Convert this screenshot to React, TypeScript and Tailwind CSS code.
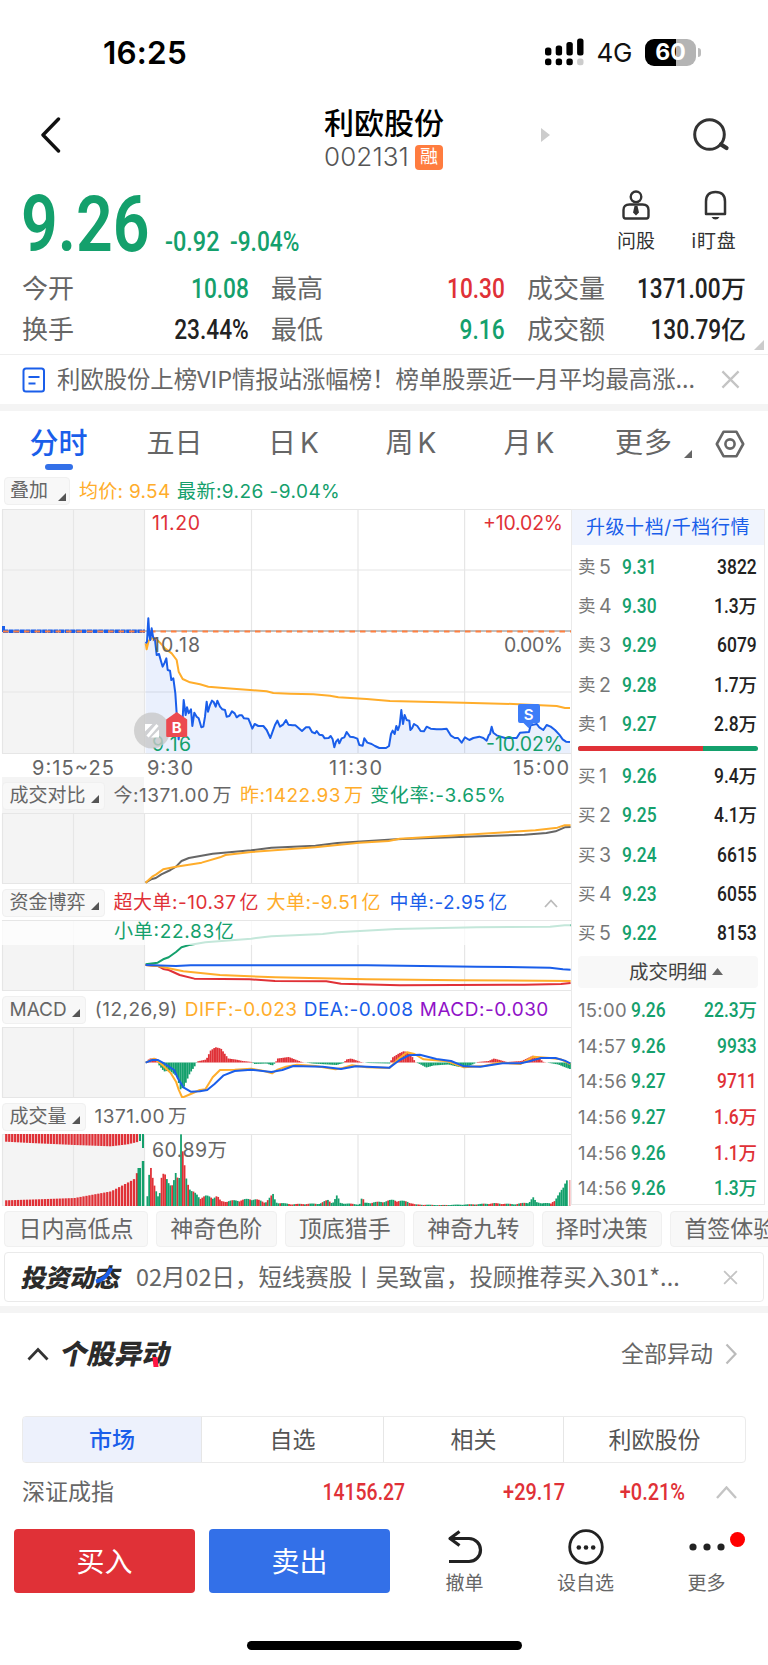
import React from "react";
import clsx from "clsx";

const GREEN = "#14a06c";
const RED = "#e03137";
const BLUE = "#1a5eea";
const ORANGE = "#ffad2b";
const GRAY = "#666666";

type Point = [number, number];

// Condensed figures used for every quote on the page
const Num = ({
  children,
  left,
  className,
}: {
  children: React.ReactNode;
  left?: boolean;
  className?: string;
}) => (
  <span
    className={clsx(
      "inline-block scale-x-[0.83] font-['Roboto'] font-medium",
      left ? "origin-left" : "origin-right",
      className
    )}
  >
    {children}
  </span>
);

const interpolate = (points: Point[], x: number) => {
  for (let i = 1; i < points.length; i++) {
    const [x0, y0] = points[i - 1];
    const [x1, y1] = points[i];
    if (x >= x0 && x <= x1) {
      return y0 + ((y1 - y0) * (x - x0)) / (x1 - x0);
    }
  }
  return 0;
};

const Line = ({ points, color, opacity }: { points: string; color: string; opacity?: number }) => (
  <polyline
    points={points}
    fill="none"
    stroke={color}
    strokeWidth={2}
    strokeLinejoin="round"
    opacity={opacity}
    vectorEffect="non-scaling-stroke"
  />
);

const Grid = ({ top, bottom, rows = [] }: { top: number; bottom: number; rows?: number[] }) => (
  <g stroke="#e6e6e6" strokeWidth={1.2}>
    <rect x={2} y={top} width={142.5} height={bottom - top} fill="#f4f4f4" stroke="none" />
    {[2.5, 73.5, 144.5, 251.5, 358, 464.6].map((x) => (
      <line key={x} x1={x} x2={x} y1={top} y2={bottom} />
    ))}
    {[top, ...rows, bottom].map((y) => (
      <line key={y} x1={2} x2={571} y1={y} y2={y} />
    ))}
  </g>
);

const priceLine =
  "437,430 441,425 445,355 448,405 451,420 455,385 459,410 465,420 470,465 477,462 482,480 488,500 494,488 499,475 503,510 510,512 514,540 520,535 526,580 530,640 536,718 540,680 546,690 551,600 557,645 561,622 566,640 573,628 577,678 583,638 590,650 596,655 604,682 610,680 615,650 620,605 624,635 630,615 636,602 641,606 647,620 652,602 660,620 667,628 675,630 680,650 688,648 696,634 704,640 710,652 718,646 726,646 732,655 745,656 750,668 757,686 764,672 775,678 790,678 800,690 811,714 818,694 825,675 832,662 840,680 850,673 858,660 865,674 878,676 886,676 906,693 918,682 928,682 936,696 945,700 950,693 958,704 968,706 974,715 986,714 992,708 998,718 1003,742 1008,725 1014,718 1018,730 1025,715 1033,712 1040,696 1050,710 1062,712 1072,716 1078,735 1088,737 1093,715 1102,728 1115,732 1125,738 1138,744 1158,744 1167,738 1173,702 1178,692 1184,702 1189,678 1194,690 1199,675 1204,630 1209,672 1214,645 1220,660 1228,662 1231,690 1236,685 1242,672 1252,678 1262,693 1272,694 1280,680 1292,686 1310,688 1325,688 1340,686 1352,706 1364,714 1374,714 1385,728 1395,712 1408,720 1420,714 1438,710 1450,714 1460,722 1466,706 1470,702 1475,680 1480,698 1490,706 1515,714 1550,714 1560,698 1587,696 1592,676 1610,672 1618,682 1630,690 1640,675 1652,680 1665,690 1678,704 1688,718 1698,725 1710,726";
const averageLine =
  "437,430 440,448 446,422 455,415 465,414 480,428 495,445 515,460 530,480 536,515 548,537 570,547 600,553 625,560 680,565 750,570 800,574 820,579 870,581 940,583 990,587 1015,592 1100,597 1170,603 1390,608 1540,612 1670,618 1695,624 1710,624";

const PriceChart = () => (
  <svg className="block overflow-visible" width={571} height={268} viewBox="0 509 571 268">
    <Grid top={509.5} bottom={753.5} rows={[570, 692]} />
    <line x1={2} x2={571} y1={631} y2={631} stroke="#aaa" strokeWidth={1.4} />
    <line x1={3} x2={145} y1={631.3} y2={631.3} stroke={BLUE} strokeWidth={3.4} strokeDasharray="5 .6" />
    <rect x={2} y={626} width={3} height={6} fill={BLUE} />
    <line x1={3} x2={571} y1={631.5} y2={631.5} stroke="#ff8040" strokeWidth={1.8} strokeDasharray="5.5 5" />
    <g transform="translate(0 500) scale(.33333)">
      <polygon points={`437,760 ${priceLine} 1712,760`} fill="#1a5eea" opacity={0.09} />
      <Line points={averageLine} color={ORANGE} />
      <Line points={priceLine} color={BLUE} />
    </g>
    <g fontFamily="Inter" fontSize={19.5} fill={GRAY}>
      <text x={152} y={530} textLength={48} fill={RED}>11.20</text>
      <text x={152} y={652} textLength={48}>10.18</text>
      <text x={483} y={530} textLength={80} fill={RED}>+10.02%</text>
      <text x={504} y={652} textLength={59}>0.00%</text>
      <text x={486} y={751} textLength={77} fill={GREEN}>-10.02%</text>
      <text x={152} y={751} textLength={39} fill={GREEN}>9.16</text>
      <text x={32} y={774.5} textLength={82} fontSize={20}>9:15~25</text>
      <text x={147} y={774.5} textLength={46} fontSize={20}>9:30</text>
      <text x={329} y={774.5} textLength={53} fontSize={20}>11:30</text>
      <text x={513} y={774.5} textLength={56} fontSize={20}>15:00</text>
    </g>
    <circle cx={152} cy={730.5} r={18} fill="#c8c8c8" opacity={0.8} />
    <path d="M145 724h7.500l-7.500 7.500zM159 729.500v8h-8z" fill="#fff" />
    <path d="M147.500 736.500l10-11.500" stroke="#fff" strokeWidth={3} />
    <path d="M176.700 712l10.500 7.500v16.500q0 1-1 1h-19q-1 0-1-1v-16.500z" fill="#ec4a50" />
    <text x={176.7} y={733} fontFamily="Inter" fontWeight={700} fontSize={15} fill="#fff" textAnchor="middle">B</text>
    <path d="M520 704h18q2 0 2 2v15q0 2-2 2h-4.500l-5 5l-5-5h-3.500q-2 0-2-2v-15q0-2 2-2z" fill="#3d7df8" />
    <text x={528.7} y={719.5} fontFamily="Inter" fontWeight={600} fontSize={15} fill="#fff" textAnchor="middle">S</text>
  </svg>
);

const CompareChart = () => (
  <svg className="block" width={571} height={71} viewBox="0 813 571 71">
    <Grid top={813.5} bottom={883.5} />
    <g transform="translate(0 770) scale(.3667 .3333)">
      <Line color={GRAY} points="397,338 412,328 425,324 440,313 465,300 480,290 495,273 515,264 580,251 685,241 740,233 860,227 920,219 1080,208 1270,200 1430,194 1490,189 1515,184 1540,172 1556,171" />
      <Line color={ORANGE} points="397,338 415,320 425,314 445,298 480,290 550,278 600,262 615,255 685,246 860,232 980,218 1060,213 1090,206 1270,194 1460,181 1520,173 1540,166 1556,166" />
    </g>
  </svg>
);

const FundsChart = () => (
  <svg className="block" width={571} height={71} viewBox="0 920 571 71">
    <Grid top={920.5} bottom={990.5} />
    <g transform="translate(0 770) scale(.3667 .3333)">
      <Line color={GREEN} points="397,583 430,578 445,568 460,562 480,546 495,532 520,524 560,517 685,506 740,499 880,492 920,487 1080,477 1300,472 1500,470 1540,466 1556,466" />
      <Line color={RED} points="397,585 430,588 445,597 460,600 490,615 530,626 680,628 750,633 890,634 930,641 1090,646 1430,644 1530,642 1556,639" />
      <Line color={ORANGE} points="397,585 430,588 500,604 600,615 750,622 1000,628 1250,631 1556,633" />
      <Line color={BLUE} points="397,585 480,588 520,586 1000,586 1300,590 1500,593 1535,598 1556,599" />
    </g>
    <rect x={0} y={921} width={570} height={24} fill="#fff" opacity={0.75} />
    <text x={114} y={938} textLength={120} fontSize={19} fill={GREEN} fontFamily="Inter, 'Noto Sans CJK SC', sans-serif">小单:22.83亿</text>
  </svg>
);

const histogram: Point[] = [
  [399, 1], [405, 4], [425, 4], [430, -2], [445, -9], [460, -8], [480, -14], [490, -27],
  [500, -24], [515, -11], [530, -3], [535, 1], [560, 3], [572, 12], [585, 15.3], [600, 14],
  [620, 4], [640, 3], [660, 1.5], [685, 0.5], [690, -1.5], [725, -1], [740, -3], [748, -0.5],
  [755, 4], [785, 5.5], [820, 0.5], [850, -1], [915, -2.5], [935, -0.5], [942, 3], [955, 4],
  [982, 0.5], [1000, -0.5], [1060, -1], [1068, 5], [1085, 9], [1100, 11.5], [1118, 8],
  [1130, 0.5], [1145, -2], [1160, -5], [1180, -3], [1220, -2], [1250, -4.5], [1280, -3],
  [1300, 0.5], [1330, 1.5], [1345, 4], [1380, 0.5], [1420, 1.5], [1452, 7], [1465, 5],
  [1480, 0.5], [1520, -2], [1540, -5], [1556, -7],
];

const MacdChart = () => (
  <svg className="block" width={571} height={71} viewBox="0 1027 571 71">
    <Grid top={1027.5} bottom={1097.5} />
    {Array.from({ length: 240 }, (_, i) => {
      const x = 146 + i * 1.77;
      const v = interpolate(histogram, x * 2.727);
      return (
        <rect
          key={i}
          x={x}
          y={v > 0 ? 1062.5 - v : 1062.5}
          width={1.8}
          height={Math.abs(v)}
          fill={v > 0 ? RED : GREEN}
        />
      );
    })}
    <g transform="translate(0 990) scale(.3667 .3333)">
      <Line color={ORANGE} points="397,218 420,206 440,222 465,248 480,275 487,298 497,323 520,312 545,300 560,298 580,262 600,240 640,239 685,236 720,243 742,250 755,240 780,230 810,224 860,228 915,238 935,234 960,226 1000,232 1062,234 1085,208 1110,187 1130,192 1155,208 1220,214 1265,232 1320,228 1360,218 1420,222 1455,200 1500,204 1530,208 1555,222" />
      <Line color={BLUE} points="397,218 415,210 430,210 450,222 475,240 485,265 500,292 520,305 545,304 565,300 585,282 610,256 640,243 685,239 740,246 770,240 800,228 880,230 930,237 970,229 1062,233 1090,210 1115,196 1145,194 1190,207 1230,213 1265,229 1310,230 1370,220 1420,220 1450,212 1475,204 1515,204 1540,212 1555,220" />
    </g>
  </svg>
);

const auctionTop: Point[] = [[12, 23], [80, 27], [200, 33], [300, 37], [345, 31], [372, 24]];
const auctionBottom: Point[] = [[12, 17], [100, 20], [200, 24], [300, 44], [345, 70], [362, 80], [372, 102]];
const volume: Point[] = [
  [398, 40], [402, 45], [406, 128], [411, 106], [416, 70], [424, 45], [429, 32], [434, 55],
  [440, 98], [449, 94], [455, 72], [465, 58], [471, 70], [475, 104], [482, 84], [487, 84],
  [490, 215], [493, 215], [497, 148], [503, 108], [507, 70], [520, 46], [535, 38], [545, 28],
  [560, 32], [575, 30], [590, 32], [600, 15], [640, 18], [690, 24], [720, 12], [742, 37],
  [750, 12], [790, 6], [870, 8], [892, 20], [905, 10], [917, 34], [925, 10], [978, 5],
  [985, 28], [993, 10], [1040, 14], [1070, 20], [1110, 14], [1130, 5], [1200, 3], [1300, 6],
  [1345, 9], [1400, 6], [1440, 12], [1451, 28], [1460, 12], [1500, 8], [1515, 28], [1530, 50],
  [1545, 80], [1547, 0], [1560, 0],
];

const isRedBar = (i: number, x: number) => {
  if (i < 2 || x > 555) return false;
  // opening spike and the peak before ten o'clock
  if (i < 5) return true;
  if (x > 177 && x < 181.5) return false;
  if (x >= 181.5 && x < 183.5) return true;
  const busy = x < 230 || (x > 370 && x < 415);
  return Math.sin(i * 7.13 + i * i) > (busy ? 0 : 0.5);
};

const VolumeChart = () => (
  <svg className="block" width={571} height={72} viewBox="0 1134 571 72">
    <Grid top={1134.5} bottom={1206} />
    {Array.from({ length: 45 }, (_, i) => {
      const x = 14 + i * 8.1;
      return (
        <g key={i} fill={RED}>
          <rect x={x / 2.727} y={1134} width={2.3} height={interpolate(auctionTop, x) / 3} />
          <rect
            x={x / 2.727}
            y={1206 - interpolate(auctionBottom, x) / 3}
            width={2.3}
            height={interpolate(auctionBottom, x) / 3}
          />
        </g>
      );
    })}
    <g fill={GREEN}>
      <rect x={139} y={1134} width={2} height={7} />
      <rect x={142} y={1134} width={2} height={14} />
      <rect x={137.5} y={1168} width={3.5} height={38} />
      <rect x={141.8} y={1161} width={2.5} height={45} />
    </g>
    {Array.from({ length: 240 }, (_, i) => {
      const x = 146.5 + i * 1.77;
      const base = interpolate(volume, x * 2.727);
      const noise = 0.7 + 0.3 * Math.abs(Math.sin(i * 12.9898));
      const h = (base > 60 ? base : base * noise) / 3;
      return <rect key={i} x={x} y={1206 - h} width={1.78} height={h} fill={isRedBar(i, x) ? RED : GREEN} />;
    })}
    <rect x={569} y={1180} width={1.5} height={26} fill="#f3a4a7" />
    <text x={152} y={1157} textLength={75} fontSize={19.5} fill={GRAY} fontFamily="Inter, 'Noto Sans CJK SC', sans-serif">60.89万</text>
  </svg>
);

const Corner = ({ className, size = 8 }: { className?: string; size?: number }) => (
  <svg className={className} width={size} height={size} viewBox="0 0 8 8">
    <path d="M8 0v8H0z" fill="currentColor" />
  </svg>
);

const Unit = ({ children }: { children: React.ReactNode }) => <span className="ml-[3px]">{children}</span>;

const PanelHeader = ({
  label,
  gray,
  children,
}: {
  label: string;
  gray?: boolean;
  children: React.ReactNode;
}) => (
  <div
    className={clsx(
      "flex h-9 items-center pl-0.5 pt-0.5 text-[19px] leading-7 text-[#666]",
      gray && "bg-[linear-gradient(90deg,#fff_2px,#f4f4f4_2px,#f4f4f4_144px,#fff_144px)]"
    )}
  >
    <span className="flex h-7 shrink-0 items-center rounded-sm border border-[#f0f0f0] bg-[#f8f8f8] pl-[6.5px] pr-[5px]">
      {label}
      <Corner className="ml-[5px] mt-1.5 text-[#555]" />
    </span>
    <span className="ml-[9px] flex grow items-center whitespace-nowrap tracking-[0.5px]">{children}</span>
  </div>
);

const stats = [
  ["今开", "10.08", "", "text-[#14a06c]"],
  ["最高", "10.30", "", "text-[#e03137]"],
  ["成交量", "1371.00", "万", "text-[#222]"],
  ["换手", "23.44%", "", "text-[#222]"],
  ["最低", "9.16", "", "text-[#14a06c]"],
  ["成交额", "130.79", "亿", "text-[#222]"],
];

const sells = [
  ["5", "9.31", "3822", ""],
  ["4", "9.30", "1.3", "万"],
  ["3", "9.29", "6079", ""],
  ["2", "9.28", "1.7", "万"],
  ["1", "9.27", "2.8", "万"],
];

const buys = [
  ["1", "9.26", "9.4", "万"],
  ["2", "9.25", "4.1", "万"],
  ["3", "9.24", "6615", ""],
  ["4", "9.23", "6055", ""],
  ["5", "9.22", "8153", ""],
];

const trades = [
  ["15:00", "9.26", "22.3", "万", "text-[#14a06c]"],
  ["14:57", "9.26", "9933", "", "text-[#14a06c]"],
  ["14:56", "9.27", "9711", "", "text-[#e03137]"],
  ["14:56", "9.27", "1.6", "万", "text-[#e03137]"],
  ["14:56", "9.26", "1.1", "万", "text-[#e03137]"],
  ["14:56", "9.26", "1.3", "万", "text-[#14a06c]"],
];

const OrderRow = ({ side, row }: { side: string; row: string[] }) => (
  <div className="flex h-[39.3px] items-center pl-[6px] pr-[7px] leading-6">
    <span className="w-[21px] text-[17.5px] text-[#777]">{side}</span>
    <span className="w-[23px] text-[19.5px] text-[#777]">{row[0]}</span>
    <Num left className="text-[21px] text-[#14a06c]">{row[1]}</Num>
    <span className="ml-auto flex items-center font-medium text-[#222]">
      <Num className="text-[21px]">{row[2]}</Num>
      <span className="text-[18.5px]">{row[3]}</span>
    </span>
  </div>
);

const StatusBar = () => (
  <div className="flex h-[104px] items-center pl-[103px] pr-[67px]">
    <span className="mt-0.5 text-[31.5px] font-semibold leading-none tracking-[0.2px] text-black">16:25</span>
    <svg className="ml-auto mr-px" width={40} height={28} viewBox="0 0 40 28">
      {[8, 10, 13.5, 17].map((h, i) => (
        <g key={h}>
          <rect x={1 + i * 10.7} y={17.5 - h} width={6.4} height={h} rx={2.5} />
          <rect x={1 + i * 10.7} y={20.5} width={6.4} height={6.8} rx={2.5} fill={i === 3 ? "#ccc" : "#000"} />
        </g>
      ))}
    </svg>
    <span className="ml-[11px] mt-0.5 text-[26px] leading-none tracking-[-0.3px] text-[#111]">4G</span>
    <span className="ml-[13px] flex h-[27px] w-[51px] items-center justify-center rounded-[9px] bg-[linear-gradient(90deg,#000_60%,#b4b4b4_60%)] text-[23px] font-bold leading-none text-white">
      60
    </span>
    <span className="ml-0.5 h-[9px] w-[3px] rounded-r-full bg-[#bbb]" />
  </div>
);

const Header = () => (
  <header className="flex h-[84px] items-start">
    <svg className="ml-[40px] mt-[13px]" width={22} height={36} viewBox="0 0 22 36">
      <path d="M18.500 2L3 18l15.500 16" fill="none" stroke="#111" strokeWidth={3.4} strokeLinecap="round" strokeLinejoin="round" />
    </svg>
    <div className="ml-[262px] mt-0.5 w-[121px]">
      <h1 className="whitespace-nowrap text-[30px] font-medium leading-[34px] text-black">利欧股份</h1>
      <div className="mt-1 flex items-center">
        <span className="w-[91px] text-[26px] font-light leading-[26px] tracking-[0.1px] text-[#555]">002131</span>
        <span className="h-[25px] w-[28px] rounded-[4px] bg-[#ff7c3f] text-center text-[18px] leading-[24px] text-white">融</span>
      </div>
    </div>
    <svg className="ml-[96px] mt-6" width={10} height={14} viewBox="0 0 10 14">
      <path d="M0 0l9 7-9 7z" fill="#ccc" />
    </svg>
    <svg className="ml-[142px] mt-3" width={38} height={38} viewBox="0 0 38 38" fill="none" stroke="#333" strokeWidth={3}>
      <circle cx={16.5} cy={18.500} r={14.800} />
      <path d="M28 28.500l5.500 3.500" strokeWidth={4.200} strokeLinecap="round" />
    </svg>
  </header>
);

const Quote = () => (
  <section className="h-[166px]">
    <div className="flex h-[76px] items-start pl-[21px]">
      <div className="flex h-[70px] w-[570px] items-end text-[#14a06c]">
        <span className="-mb-[4px] w-[144px] origin-left scale-x-[0.82] whitespace-nowrap font-['Roboto'] text-[78.5px] font-semibold leading-[76px]">
          9.26
        </span>
        <span className="flex text-[27px] leading-8">
          <Num left className="w-[65px] scale-x-[0.87]!">-0.92</Num>
          <Num left className="scale-x-[0.84]!">-9.04%</Num>
        </span>
      </div>
      <div className="mt-[2px] flex w-[90px] flex-col items-center text-[19px] leading-6 text-[#333]">
        <svg width={30} height={30} viewBox="0 0 30 30" fill="none" stroke="#333" strokeWidth={2.4}>
          <circle cx={15} cy={6.800} r={5.300} />
          <path d="M4.500 28.500h21q2 0 2-2.500v-6q0-5.500-6-5.500h-13q-6 0-6 5.500v6q0 2.500 2 2.500z" />
          <path d="M13.500 16h3l1.500 6.500-3 3-3-3z" fill="#333" stroke="none" />
        </svg>
        <span className="mt-[10px]">问股</span>
      </div>
      <div className="mt-[2px] flex w-[68px] flex-col items-center text-[19px] leading-6 text-[#333]">
        <svg width={30} height={30} viewBox="0 0 30 30" fill="none" stroke="#333" strokeWidth={2.5}>
          <path d="M6 24V11.500q0-9.500 9.500-9.500t9.500 9.500V24z" strokeLinejoin="round" />
          <path d="M11.500 27h8q-1.500 2.500-4 2.500t-4-2.500z" fill="#333" stroke="none" />
        </svg>
        <span className="mt-[10px] whitespace-nowrap pr-0.5 tracking-[0.8px]">i盯盘</span>
      </div>
    </div>
    <div className="relative mt-[4px] grid grid-cols-[227px_234px_219px] gap-x-[22px] pl-[22px]">
      {stats.map(([label, value, unit, color]) => (
        <div key={label} className="flex h-[41px] items-center justify-between text-[26px] leading-9 text-[#666]">
          <span>{label}</span>
          <span className={clsx("flex items-center whitespace-nowrap text-[27px]", color)}>
            <Num className="scale-x-[0.84]!">{value}</Num>
            <span className="text-[25px] font-medium">{unit}</span>
          </span>
        </div>
      ))}
      <Corner size={10} className="absolute bottom-0 right-1 text-[#ccc]" />
    </div>
  </section>
);

const Close = ({ size }: { size: number }) => (
  <svg width={size} height={size} viewBox="0 0 20 20" stroke="#c4c4c4" strokeWidth={2.4}>
    <path d="M1.500 1.500l17 17M18.500 1.500l-17 17" />
  </svg>
);

const periods = [
  ["日", "w-[123px]"],
  ["周", "w-[112px]"],
  ["月", "w-[124px]"],
];

export default function App() {
  return (
    <div className="h-[1665px] w-[768px] overflow-hidden bg-white font-['Inter','Noto_Sans_CJK_SC',sans-serif]">
      <StatusBar />
      <Header />
      <Quote />

      <div className="flex h-[50px] items-center border-t border-[#eee] pl-[22px] text-[23.4px] text-[#666]">
        <svg width={24} height={26} viewBox="0 0 24 26" fill="none" stroke={BLUE} strokeWidth={2}>
          <rect x={1.5} y={1.5} width={20.5} height={23} rx={2.5} />
          <path d="M6.500 10h11M6.500 16.500h7" />
        </svg>
        <span className="-mt-0.5 ml-[11px] mr-auto whitespace-nowrap font-['Noto_Sans_CJK_SC'] tracking-[-0.05px]">利欧股份上榜VIP情报站涨幅榜！榜单股票近一月平均最高涨...</span>
        <span className="mr-7"><Close size={19} /></span>
      </div>
      <div className="h-[7px] bg-[#f4f4f4]" />

      <nav className="flex h-[64px] items-start pt-[9px] text-[28px] leading-[47px] text-[#666]">
        <div className="flex w-[117px] flex-col items-center text-[29px] font-medium text-[#1a5eea]">
          <span>分时</span>
          <span className="-mt-[3px] h-[6px] w-7 rounded-full bg-[#3370e8]" />
        </div>
        <span className="w-[115px] text-center">五日</span>
        {periods.map(([label, width]) => (
          <span key={label} className={clsx("flex justify-center gap-1", width)}>
            <span>{label}</span>
            <span>K</span>
          </span>
        ))}
        <span className="ml-[24px] tracking-[1px]">更多</span>
        <Corner className="ml-[11px] mt-[30px] text-[#666]" />
        <svg className="ml-[23px] mt-2.5" width={30} height={28} viewBox="0 0 30 28" fill="none" stroke="#666" strokeWidth={2.6}>
          <path d="M8.500 1.800h13L28.200 14l-6.700 12.200h-13L1.800 14z" strokeLinejoin="round" />
          <circle cx={15} cy={14} r={4.6} />
        </svg>
      </nav>

      <div className="flex h-[34px] items-start pl-1 pt-0.5 text-[19px] leading-[28px]">
        <span className="flex h-7 w-[66px] items-center rounded border border-[#f0f0f0] bg-[#f8f8f8] pl-[5px] text-[#666]">
          叠加
          <Corner className="ml-2.5 mt-3 text-[#555]" />
        </span>
        <span className="ml-[9px] mt-px w-[98px] tracking-[0.3px] text-[#ffad2b]">均价: 9.54</span>
        <span className="mt-px whitespace-nowrap tracking-[0.45px] text-[#14a06c]">最新:9.26 -9.04%</span>
      </div>

      <div className="flex h-[697px]">
        <div className="w-[571px] shrink-0">
          <PriceChart />
          <PanelHeader label="成交对比" gray>
            <span className="w-[126.5px]">今:1371.00<Unit>万</Unit></span>
            <span className="w-[130px] text-[#ffad2b]">昨:1422.93<Unit>万</Unit></span>
            <span className="tracking-[0.7px] text-[#14a06c]">变化率:-3.65%</span>
          </PanelHeader>
          <CompareChart />
          <PanelHeader label="资金博弈">
            <span className="w-[153px] text-[#e03137]">超大单:-10.37<Unit>亿</Unit></span>
            <span className="w-[123px] text-[#ffad2b]">大单:-9.51<Unit>亿</Unit></span>
            <span className="w-[154px] text-[#1a5eea]">中单:-2.95<Unit>亿</Unit></span>
            <svg width={14} height={9} viewBox="0 0 14 9" fill="none" stroke="#bbb" strokeWidth={1.8}>
              <path d="M1 8l6-6.500L13 8" />
            </svg>
          </PanelHeader>
          <FundsChart />
          <PanelHeader label="MACD">
            <span className="w-[90px]">(12,26,9)</span>
            <span className="w-[119px] text-[#ffad2b]">DIFF:-0.023</span>
            <span className="w-[116px] text-[#1a5eea]">DEA:-0.008</span>
            <span className="text-[#9013c8]">MACD:-0.030</span>
          </PanelHeader>
          <MacdChart />
          <PanelHeader label="成交量">
            <span>1371.00<Unit>万</Unit></span>
          </PanelHeader>
          <VolumeChart />
        </div>

        <aside className="h-[696px] w-[194px] border border-[#eaeaea]">
          <div className="h-[35px] bg-[#f0f4fd] text-center text-[19px] leading-[35px] tracking-[0.6px] text-[#1a5eea]">升级十档/千档行情</div>
          <div className="pt-[2px]">
            {sells.map((row) => <OrderRow key={row[0]} side="卖" row={row} />)}
          </div>
          <div className="ml-1.5 mt-[3px] flex h-[5px] w-[180px] overflow-hidden rounded-sm bg-[#14a06c]">
            <div className="w-[125px] bg-[#e03137]" />
          </div>
          <div className="pt-[5px]">
            {buys.map((row) => <OrderRow key={row[0]} side="买" row={row} />)}
          </div>
          <div className="mx-1.5 mt-[3px] flex h-8 items-center justify-center rounded bg-[#f8f8f8] pl-4 text-[19.5px] leading-8 text-[#444]">
            成交明细
            <svg className="ml-[5px]" width={11} height={7} viewBox="0 0 11 7">
              <path d="M0 7l5.500-7L11 7z" fill="#666" />
            </svg>
          </div>
          <div className="pt-[4px]">
            {trades.map(([time, price, amount, unit, color], i) => (
              <div key={i} className="flex h-[35.7px] items-center pl-[6px] pr-[7px] leading-6">
                <span className="w-[53px] text-[18.5px] tracking-[0.3px] text-[#777]">{time}</span>
                <Num left className="text-[21px] text-[#14a06c]">{price}</Num>
                <span className={clsx("ml-auto flex items-center font-medium", color)}>
                  <Num className="text-[21px]">{amount}</Num>
                  <span className="text-[18.5px]">{unit}</span>
                </span>
              </div>
            ))}
          </div>
        </aside>
      </div>

      <div className="mt-[5px] flex h-[36px] gap-2 pl-1 text-[23px] leading-[35px] text-[#666]">
        <span className="w-[144px] shrink-0 rounded border border-[#f0f0f0] bg-[#f8f8f8] text-center">日内高低点</span>
        {["神奇色阶", "顶底猎手", "神奇九转", "择时决策", "首签体验"].map((item) => (
          <span key={item} className="w-[120.5px] shrink-0 rounded border border-[#f0f0f0] bg-[#f8f8f8] text-center">
            {item}
          </span>
        ))}
      </div>

      <div className="mx-1 mt-[5px] flex h-[50px] items-center rounded border border-[#eaeaea] pl-[17px] text-[23.4px] text-[#666]">
        <span className="relative mt-1 w-[114px] whitespace-nowrap text-[25px] font-black tracking-[-0.5px] text-[#2b2b2b]">
          <span className="inline-block -skew-x-12">投资动态</span>
          <svg className="absolute left-[73px] top-[5px]" width={22} height={20} viewBox="0 0 22 20">
            <path d="M1 16.500q10-2 15-13.500" fill="none" stroke={BLUE} strokeWidth={4} />
          </svg>
        </span>
        <span className="mr-auto whitespace-nowrap font-['Noto_Sans_CJK_SC'] tracking-[0.05px]">02月02日，短线赛股丨吴致富，投顾推荐买入301*...</span>
        <span className="mr-[25px]"><Close size={15} /></span>
      </div>
      <div className="mt-1 h-[7px] bg-[#f4f4f4]" />

      <div className="flex h-[82px] items-center pl-[27px] pr-[31px]">
        <svg width={22} height={14} viewBox="0 0 22 14" fill="none" stroke="#333" strokeWidth={2.8}>
          <path d="M1.500 12.500L11 2.500l9.500 10" />
        </svg>
        <span className="relative ml-3 text-[27.5px] font-black leading-9 text-[#2b2b2b]">
          <span className="inline-block -skew-x-12">个股异动</span>
          <span className="absolute bottom-[5px] left-[92px] h-[10px] w-[5px] skew-x-6 bg-[#ff1744]" />
        </span>
        <span className="ml-auto text-[23px] text-[#666]">全部异动</span>
        <svg className="ml-3" width={12} height={22} viewBox="0 0 12 22" fill="none" stroke="#bbb" strokeWidth={2.2}>
          <path d="M1.500 1.500L10.500 11l-9 9.500" />
        </svg>
      </div>

      <div className="mx-[22px] mt-[21px] grid h-[47px] grid-cols-[179px_182px_180px_1fr] divide-x divide-[#e6e6e6] overflow-hidden rounded border border-[#ebebeb] text-center text-[23px] leading-[47px] text-[#555]">
        <span className="bg-[#edf1fc] font-medium text-[#1a5eea]">市场</span>
        <span>自选</span>
        <span>相关</span>
        <span>利欧股份</span>
      </div>

      <div className="flex h-[66px] items-center pb-2 pl-[22px] pr-[31px] text-[24px] text-[#e03137]">
        <span className="mr-auto text-[23px] text-[#666]">深证成指</span>
        <Num className="scale-x-[0.81]!">14156.27</Num>
        <Num className="w-[160px] text-right">+29.17</Num>
        <Num className="w-[120px] text-right">+0.21%</Num>
        <svg className="ml-[31px]" width={21} height={13} viewBox="0 0 21 13" fill="none" stroke="#c4c4c4" strokeWidth={2.4}>
          <path d="M1 12L10.500 1.500 20 12" />
        </svg>
      </div>

      <footer className="flex h-[64px] pl-[14px] text-[28px] leading-[66px] text-white">
        <button className="h-full w-[181px] rounded-[4px] bg-[#e03137]">买入</button>
        <button className="ml-3.5 h-full w-[181px] rounded-[4px] bg-[#3370e8]">卖出</button>
        <div className="ml-[14px] flex w-[121px] flex-col items-center text-[19px] leading-6 text-[#666]">
          <svg className="shrink-0" width={38} height={36} viewBox="0 0 38 36" fill="none" stroke="#222" strokeWidth={3.2}>
            <path d="M3 9.500h20a11.500 11.500 0 0 1 0 23H3" />
            <path d="M13.500 2.500L4 9.500l9.500 7" strokeLinejoin="round" />
          </svg>
          <span className="mt-[7px]">撤单</span>
        </div>
        <div className="flex w-[121px] flex-col items-center text-[19px] leading-6 text-[#666]">
          <svg className="shrink-0" width={38} height={36} viewBox="0 0 38 36" fill="#222">
            <circle cx={19} cy={18} r={16.3} fill="none" stroke="#222" strokeWidth={2.8} />
            <circle cx={11.8} cy={18.5} r={2.3} />
            <circle cx={19} cy={18.5} r={2.3} />
            <circle cx={26.2} cy={18.5} r={2.3} />
          </svg>
          <span className="mt-[7px]">设自选</span>
        </div>
        <div className="relative flex w-[121px] flex-col items-center text-[19px] leading-6 text-[#666]">
          <svg className="shrink-0" width={38} height={36} viewBox="0 0 38 36" fill="#222">
            <circle cx={5} cy={18} r={3.6} />
            <circle cx={19} cy={18} r={3.6} />
            <circle cx={33} cy={18} r={3.6} />
          </svg>
          <span className="absolute left-[84px] top-[3px] size-[15px] rounded-full bg-[#ff0000]" />
          <span className="mt-[7px]">更多</span>
        </div>
      </footer>
      <div className="mx-auto mt-[48px] h-[9px] w-[275px] rounded-full bg-black" />
    </div>
  );
}
